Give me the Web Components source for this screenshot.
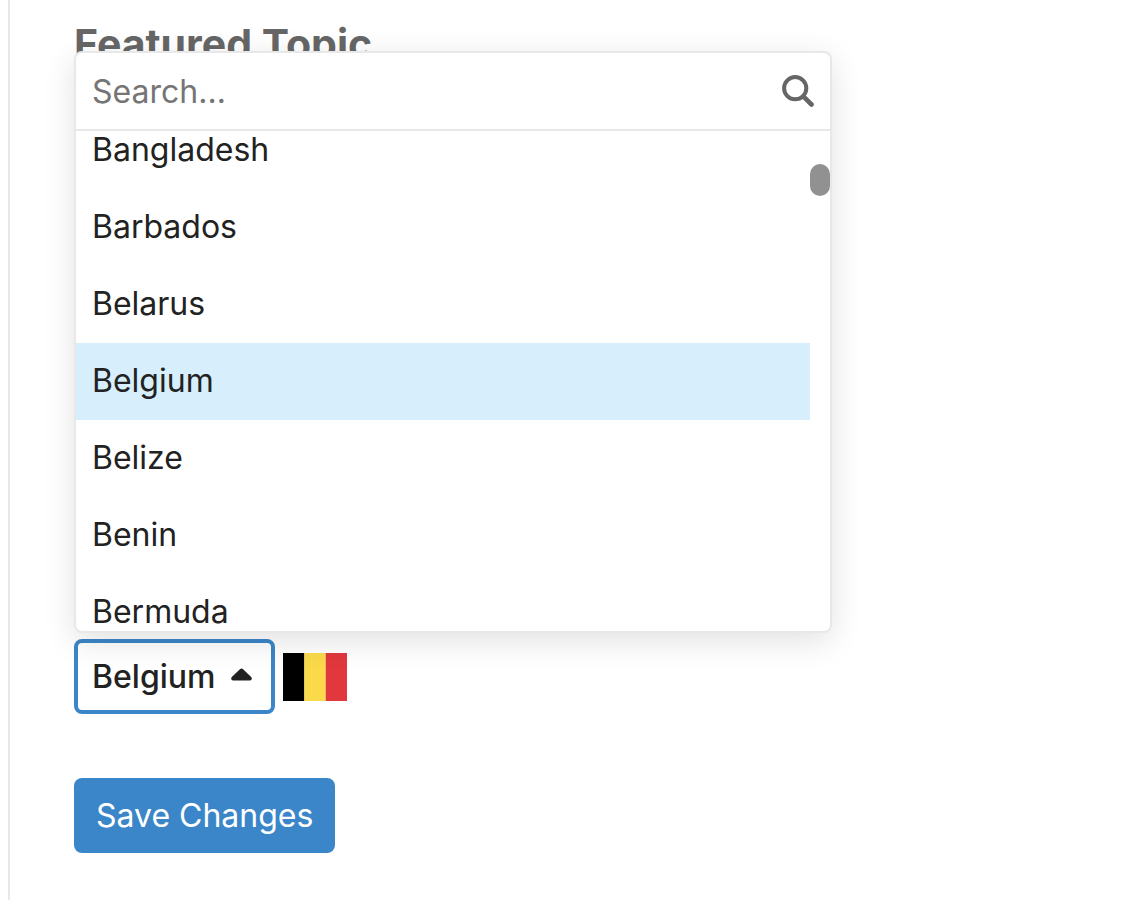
<!DOCTYPE html>
<html lang="en">
<head>
<meta charset="utf-8">
<title>Featured Topic</title>
<style>
  html { background: #fff; }
  body { margin: 0; color: #222; font: 400 32px/40px Inter, "Liberation Sans", sans-serif; }
</style>
</head>
<body>
<settings-panel>
  <span slot="title">Featured Topic</span>
  <topic-picker></topic-picker>
  <save-button slot="actions">Save Changes</save-button>
</settings-panel>

<script>
  function define(name, html, setup) {
    customElements.define(name, class extends HTMLElement {
      constructor() {
        super();
        this.attachShadow({ mode: "open" }).innerHTML = html;
      }
      connectedCallback() {
        if (setup) setup(this, this.shadowRoot);
      }
    });
  }

  define("save-button", `
    <style>
      :host { display: block; }
      button {
        display: block; margin: 0; padding: 0 22px; height: 75px; border: 0; border-radius: 8px;
        background: #3b86c8; color: #fff; font: inherit; cursor: pointer;
      }
    </style>
    <button type="submit"><slot></slot></button>`);

  define("search-field", `
    <style>
      :host { display: block; border-bottom: 2px solid #e8e8e8; }
      label { display: flex; align-items: center; height: 76px; padding: 0 16px; }
      input {
        flex: 1; min-width: 0; margin: 0; padding: 2px 0 0; border: 0; outline: 0;
        background: none; color: #222; font: inherit;
      }
      input::placeholder { color: #757575; opacity: 1; }
      svg { display: block; flex: none; }
    </style>
    <label>
      <input type="text" placeholder="Search..." aria-label="Search countries">
      <svg width="34" height="34" viewBox="0 0 34 34" fill="none" stroke="#666" aria-hidden="true">
        <circle cx="15.200" cy="14.200" r="11.100" stroke-width="4"/>
        <path d="M23.300 22.300l8.200 8.200" stroke-width="4.600" stroke-linecap="round"/>
      </svg>
    </label>`);

  define("country-option", `
    <style>
      :host {
        display: flex; flex: none; align-items: center; box-sizing: border-box; height: 77px;
        padding: 0 16px 2px; cursor: pointer;
      }
      :host([aria-selected="true"]) { background: #d7eefc; }
    </style>
    <slot></slot>`);

  define("country-menu", `
    <style>
      :host {
        display: block; box-sizing: border-box; background: #fff; overflow: hidden;
        border: 2px solid #e8e8e8; border-radius: 8px; box-shadow: 0 8px 32px rgba(0, 0, 0, 0.12);
      }
      .body { display: flex; height: 500px; }
      .list { flex: 1; display: flex; flex-direction: column; overflow: hidden; }
      .track { width: 20px; padding-top: 33px; }
      .thumb { height: 32px; border-radius: 10px; background: #919191; }
    </style>
    <search-field></search-field>
    <div class="body">
      <div class="list" role="listbox" aria-label="Countries"><slot></slot></div>
      <div class="track"><div class="thumb"></div></div>
    </div>`);

  define("belgium-flag", `
    <style>
      :host { display: block; }
      svg { display: block; }
    </style>
    <svg width="64" height="48" viewBox="0 0 64 48" role="img" aria-label="Flag of Belgium">
      <path fill="#000" d="M0 0h21.400v48H0z"/>
      <path fill="#fada4b" d="M21.300 0h21.400v48H21.300z"/>
      <path fill="#e0383d" d="M42.700 0H64v48H42.700z"/>
    </svg>`);

  define("topic-picker", `
    <style>
      :host { display: flex; position: relative; align-items: center; gap: 8px; }
      country-menu { position: absolute; left: 0; bottom: calc(100% + 6px); width: 758px; max-width: 100%; }
      button {
        display: flex; align-items: center; gap: 16px; box-sizing: border-box; height: 75px; margin: 0;
        padding: 0 18px 0 14px; border: 4px solid #3b86c8; border-radius: 8px;
        background: transparent; color: #222; font: inherit; font-weight: 500; cursor: pointer;
      }
      svg { display: block; }
    </style>
    <button type="button" aria-haspopup="listbox" aria-expanded="true">
      Belgium
      <svg width="22" height="18" viewBox="0 0 22 18" aria-hidden="true">
        <path fill="#222" d="M9.200 1Q10.500-.2 11.800 1L20 8.800Q22 11.400 19.200 12.400H1.800Q-1 11.400 1 8.800z"/>
      </svg>
    </button>
    <belgium-flag></belgium-flag>
    <country-menu></country-menu>`, (host, root) => {
      const menu = root.querySelector("country-menu");
      for (const name of ["Bangladesh", "Barbados", "Belarus", "Belgium", "Belize", "Benin", "Bermuda"]) {
        const option = document.createElement("country-option");
        option.setAttribute("role", "option");
        option.setAttribute("aria-selected", String(name === "Belgium"));
        option.textContent = name;
        menu.append(option);
      }
      menu.shadowRoot.querySelector(".list").scrollTop = 19;
    });

  define("settings-panel", `
    <style>
      :host {
        display: block; box-sizing: border-box; min-height: 100vh; margin-left: 8px;
        padding: 20px 64px 40px; border-left: 2px solid #e8e8e8;
      }
      h2 { margin: 0 0 571px; color: #666; font-size: 41px; line-height: 48px; font-weight: 700; }
      .actions { margin-top: 64px; display: flex; }
    </style>
    <h2><slot name="title"></slot></h2>
    <slot></slot>
    <div class="actions"><slot name="actions"></slot></div>`);
</script>
</body>
</html>
